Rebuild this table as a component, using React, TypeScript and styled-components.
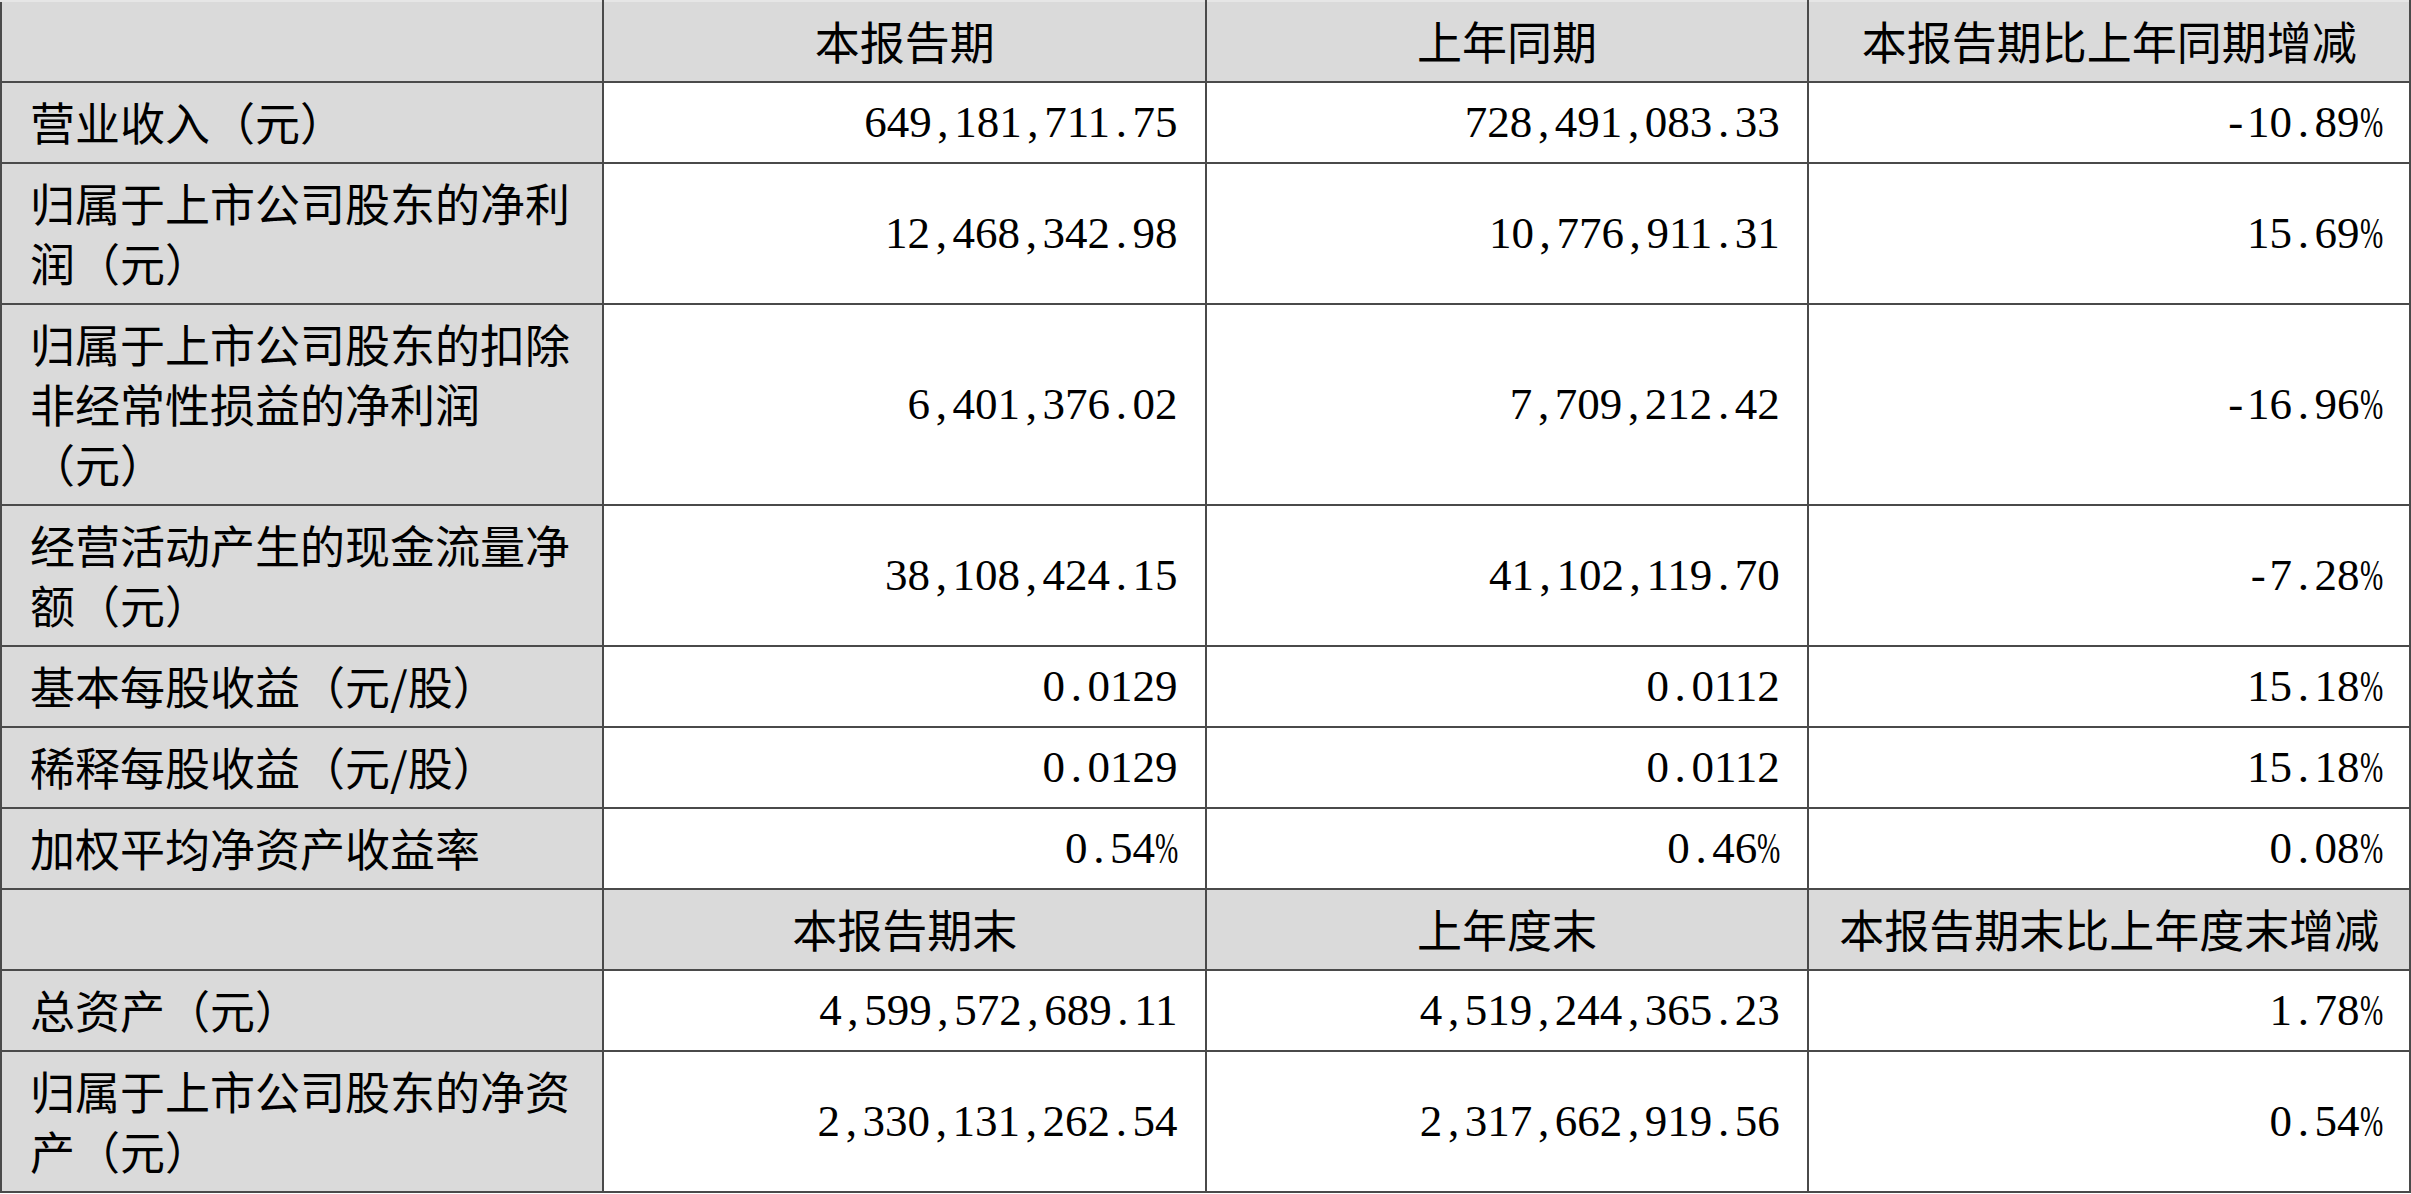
import React from 'react';
import styled, {createGlobalStyle} from 'styled-components';

const GlobalStyle = createGlobalStyle`
    html, body {
        margin: 0;
        padding: 0;
        background: #ffffff;
    }
`;

type Row = {
    kind: 'head' | 'data';
    cells: string[];
};

const rows: Row[] = [
    {kind: 'head', cells: ['', '本报告期', '上年同期', '本报告期比上年同期增减']},
    {kind: 'data', cells: ['营业收入（元）', '649,181,711.75', '728,491,083.33', '-10.89%']},
    {kind: 'data', cells: ['归属于上市公司股东的净利\n润（元）', '12,468,342.98', '10,776,911.31', '15.69%']},
    {kind: 'data', cells: ['归属于上市公司股东的扣除\n非经常性损益的净利润\n（元）', '6,401,376.02', '7,709,212.42', '-16.96%']},
    {kind: 'data', cells: ['经营活动产生的现金流量净\n额（元）', '38,108,424.15', '41,102,119.70', '-7.28%']},
    {kind: 'data', cells: ['基本每股收益（元/股）', '0.0129', '0.0112', '15.18%']},
    {kind: 'data', cells: ['稀释每股收益（元/股）', '0.0129', '0.0112', '15.18%']},
    {kind: 'data', cells: ['加权平均净资产收益率', '0.54%', '0.46%', '0.08%']},
    {kind: 'head', cells: ['', '本报告期末', '上年度末', '本报告期末比上年度末增减']},
    {kind: 'data', cells: ['总资产（元）', '4,599,572,689.11', '4,519,244,365.23', '1.78%']},
    {kind: 'data', cells: ['归属于上市公司股东的净资\n产（元）', '2,330,131,262.54', '2,317,662,919.56', '0.54%']},
];

// 반각 숫자 폭(0.5em)에 맞춰 구두점 폭을 고정
function Num({value}: {value: string}) {
    return (
        <>
            {value.split('').map((ch, i) => {
                if (ch === ',' || ch === '.' || ch === '-') {
                    return <Glyph key={i}>{ch}</Glyph>;
                }
                if (ch === '%') {
                    return <Glyph key={i} $squeeze>{ch}</Glyph>;
                }
                return ch;
            })}
        </>
    );
}

function App() {
    return (
        <>
            <GlobalStyle/>
            <Table>
                <colgroup>
                    <col/>
                    <col/>
                    <col/>
                    <col/>
                </colgroup>
                <tbody>
                {rows.map((row, r) => (
                    <tr key={r}>
                        {row.cells.map((cell, c) => {
                            if (c === 0) {
                                return <LabelCell key={c} $first={r === 0}>{cell}</LabelCell>;
                            }
                            if (row.kind === 'head') {
                                return <HeadCell key={c} $first={r === 0}>{cell}</HeadCell>;
                            }
                            return <ValueCell key={c}><Num value={cell}/></ValueCell>;
                        })}
                    </tr>
                ))}
                </tbody>
            </Table>
        </>
    );
}

const Table = styled.table`
    width: 2411px;
    table-layout: fixed;
    border-collapse: collapse;
    font-family: "Liberation Serif", "Noto Sans CJK SC", serif;
    font-size: 45px;
    line-height: 60px;
    color: #000000;

    col {
        width: 25%;
    }
`;

const Cell = styled.td<{ $first?: boolean }>`
    border: 2px solid #4a4a4a;
    border-top-color: ${({$first}) => ($first ? '#e6e6e6' : '#4a4a4a')};
    padding: 9px 27px 10px 28px;
    vertical-align: middle;
    white-space: pre-line;
`;

const LabelCell = styled(Cell)`
    background: #dadada;
    text-align: left;
    font-family: "Noto Sans CJK SC", sans-serif;
`;

const HeadCell = styled(Cell)`
    background: #dadada;
    text-align: center;
    font-family: "Noto Sans CJK SC", sans-serif;
`;

const ValueCell = styled(Cell)`
    background: #ffffff;
    text-align: right;
`;

const Glyph = styled.span<{ $squeeze?: boolean }>`
    display: inline-block;
    width: 0.5em;
    text-align: ${({$squeeze}) => ($squeeze ? 'left' : 'center')};
    transform: ${({$squeeze}) => ($squeeze ? 'scaleX(0.62)' : 'none')};
    transform-origin: left center;
    overflow: visible;
`;

export default App;
